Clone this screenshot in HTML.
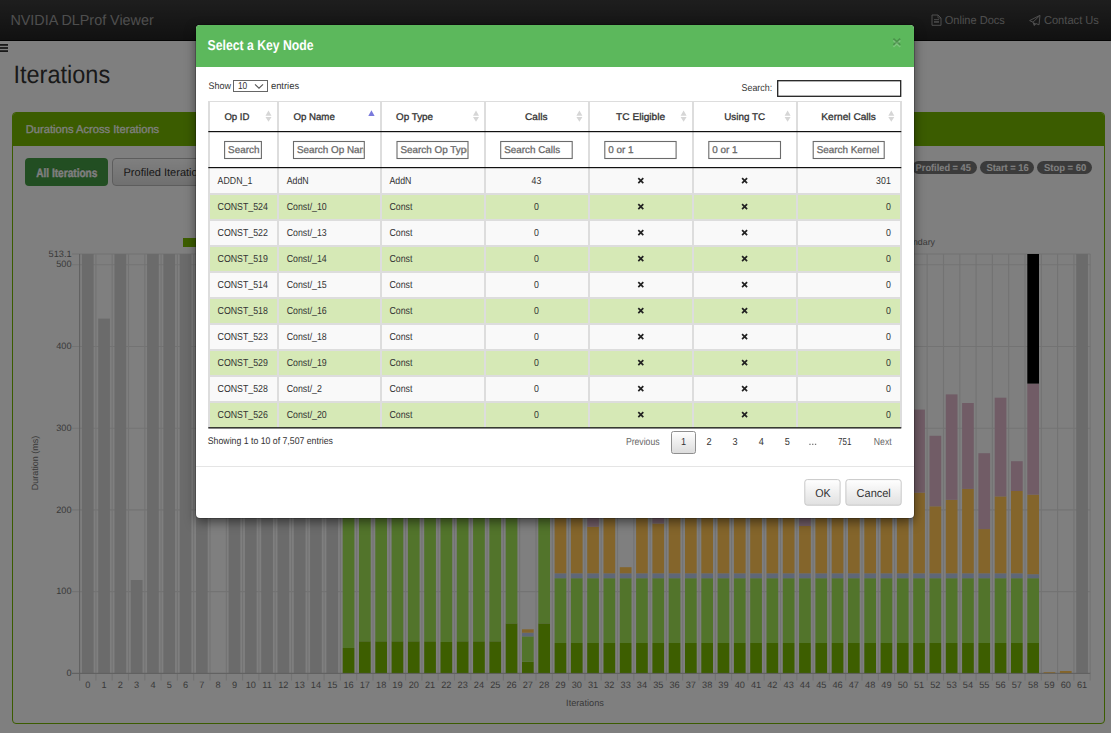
<!DOCTYPE html>
<html><head><meta charset="utf-8">
<style>
html,body{margin:0;padding:0;width:1111px;height:733px;overflow:hidden;background:#fff;font-family:"Liberation Sans",sans-serif;}
.layer{position:absolute;left:0;top:0;font-family:"Liberation Sans",sans-serif;text-rendering:geometricPrecision;}
.abs{position:absolute;}
#nav{position:absolute;left:0;top:0;width:1111px;height:40px;background:linear-gradient(#3c3c3c,#222);border-bottom:1px solid #080808;}
.panel{position:absolute;left:12px;top:112px;width:1091px;height:610px;border:1px solid #76b900;border-radius:4px;}
.panel-h{position:absolute;left:0;top:0;right:0;height:33px;background:#76b900;border-radius:3px 3px 0 0;}
.btn-ai{position:absolute;left:25px;top:158px;width:83px;height:28px;background:#449d44;border-radius:4px;}
.btn-pi{position:absolute;left:112px;top:158px;width:140px;height:26px;background:linear-gradient(#fff,#e0e0e0);border:1px solid #bbb;border-radius:4px;}
.badge{position:absolute;top:161px;height:13px;border-radius:7px;background:#777;}
#backdrop{position:absolute;left:0;top:0;width:1111px;height:733px;background:rgba(0,0,0,.5);}
#modal{position:absolute;left:196px;top:25px;width:718px;height:493px;background:#fff;border-radius:4px;box-shadow:0 0 0 1px rgba(0,0,0,.2),0 4px 11px rgba(0,0,0,.5);overflow:hidden;}
.mh{position:absolute;left:0;top:0;width:718px;height:42px;background:#5cb85c;}
</style></head><body>
<div id="nav"></div>
<div class="panel"><div class="panel-h"></div></div>
<div class="btn-ai"></div>
<div class="btn-pi"></div>
<div class="badge" style="left:912px;width:65px"></div>
<div class="badge" style="left:980px;width:54px"></div>
<div class="badge" style="left:1037px;width:55px"></div>
<svg class="layer" width="1111" height="733"><text transform="translate(10.40,24.90) scale(0.9783,1)" font-size="14.680" fill="#9d9d9d">NVIDIA DLProf Viewer</text><text transform="translate(944.70,23.90) scale(0.9520,1)" font-size="11.628" fill="#9d9d9d">Online Docs</text><text transform="translate(1043.90,23.90) scale(0.9581,1)" font-size="11.628" fill="#9d9d9d">Contact Us</text><text transform="translate(13.50,83.20) scale(0.9350,1)" font-size="25.145" fill="#333">Iterations</text><text transform="translate(25.70,132.60) scale(0.9861,1)" font-size="11.337" fill="#fff" stroke="#fff" stroke-width="0.25">Durations Across Iterations</text><text transform="translate(36.20,175.60) scale(0.8491,1)" font-size="11.919" font-weight="bold" fill="#000" fill-opacity="0.25">All Iterations</text><text transform="translate(36.20,176.60) scale(0.8389,1)" font-size="12.064" font-weight="bold" fill="#fff" stroke="#fff" stroke-width="0.35">All Iterations</text><text transform="translate(123.50,175.90) scale(1.0000,1)" font-size="11.047" fill="#333">Profiled Iterations</text><text transform="translate(915.62,171.10) scale(0.9360,1)" font-size="9.884" font-weight="bold" fill="#fff">Profiled = 45</text><text transform="translate(986.40,171.10) scale(0.9470,1)" font-size="9.884" font-weight="bold" fill="#fff">Start = 16</text><text transform="translate(1044.00,171.10) scale(0.9566,1)" font-size="9.884" font-weight="bold" fill="#fff">Stop = 60</text><rect x="0" y="44" width="8" height="1.8" fill="#333"/><rect x="0" y="47.1" width="8" height="1.8" fill="#333"/><rect x="0" y="50.2" width="8" height="1.8" fill="#333"/><path d="M932 15 h6 l3 3 v7.3 h-9 z" fill="none" stroke="#9d9d9d" stroke-width="1"/><path d="M938 15 v3 h3" fill="none" stroke="#9d9d9d" stroke-width="0.8"/><rect x="934" y="19.2" width="5" height="0.9" fill="#9d9d9d"/><rect x="934" y="21.2" width="5" height="1.5" fill="#9d9d9d"/><path d="M1040 15.3 L1029.6 20.6 L1033 22.2 L1034.3 25.5 L1036 23.6 L1039 24.8 Z M1040 15.3 L1033 22.2" fill="none" stroke="#9d9d9d" stroke-width="1" stroke-linejoin="round"/><path d="M1033 22.2 L1034.3 25.5 L1036 23.6 Z" fill="#9d9d9d"/></svg>
<div id="backdrop"></div>
<svg class="layer" width="1111" height="733"><line x1="72" y1="673.40" x2="1090.20" y2="673.40" stroke="#737373" stroke-width="1.1"/><line x1="72" y1="591.66" x2="1090.20" y2="591.66" stroke="#737373" stroke-width="1.1"/><line x1="72" y1="509.92" x2="1090.20" y2="509.92" stroke="#737373" stroke-width="1.1"/><line x1="72" y1="428.18" x2="1090.20" y2="428.18" stroke="#737373" stroke-width="1.1"/><line x1="72" y1="346.44" x2="1090.20" y2="346.44" stroke="#737373" stroke-width="1.1"/><line x1="72" y1="264.70" x2="1090.20" y2="264.70" stroke="#737373" stroke-width="1.1"/><line x1="72" y1="253.99" x2="1090.20" y2="253.99" stroke="#737373" stroke-width="1.1"/><line x1="79.60" y1="253.99" x2="79.60" y2="680.6" stroke="#737373" stroke-width="1.1"/><line x1="95.90" y1="253.99" x2="95.90" y2="680.6" stroke="#737373" stroke-width="1.1"/><line x1="112.20" y1="253.99" x2="112.20" y2="680.6" stroke="#737373" stroke-width="1.1"/><line x1="128.50" y1="253.99" x2="128.50" y2="680.6" stroke="#737373" stroke-width="1.1"/><line x1="144.80" y1="253.99" x2="144.80" y2="680.6" stroke="#737373" stroke-width="1.1"/><line x1="161.10" y1="253.99" x2="161.10" y2="680.6" stroke="#737373" stroke-width="1.1"/><line x1="177.40" y1="253.99" x2="177.40" y2="680.6" stroke="#737373" stroke-width="1.1"/><line x1="193.70" y1="253.99" x2="193.70" y2="680.6" stroke="#737373" stroke-width="1.1"/><line x1="210.00" y1="253.99" x2="210.00" y2="680.6" stroke="#737373" stroke-width="1.1"/><line x1="226.30" y1="253.99" x2="226.30" y2="680.6" stroke="#737373" stroke-width="1.1"/><line x1="242.60" y1="253.99" x2="242.60" y2="680.6" stroke="#737373" stroke-width="1.1"/><line x1="258.90" y1="253.99" x2="258.90" y2="680.6" stroke="#737373" stroke-width="1.1"/><line x1="275.20" y1="253.99" x2="275.20" y2="680.6" stroke="#737373" stroke-width="1.1"/><line x1="291.50" y1="253.99" x2="291.50" y2="680.6" stroke="#737373" stroke-width="1.1"/><line x1="307.80" y1="253.99" x2="307.80" y2="680.6" stroke="#737373" stroke-width="1.1"/><line x1="324.10" y1="253.99" x2="324.10" y2="680.6" stroke="#737373" stroke-width="1.1"/><line x1="340.40" y1="253.99" x2="340.40" y2="680.6" stroke="#737373" stroke-width="1.1"/><line x1="356.70" y1="253.99" x2="356.70" y2="680.6" stroke="#737373" stroke-width="1.1"/><line x1="373.00" y1="253.99" x2="373.00" y2="680.6" stroke="#737373" stroke-width="1.1"/><line x1="389.30" y1="253.99" x2="389.30" y2="680.6" stroke="#737373" stroke-width="1.1"/><line x1="405.60" y1="253.99" x2="405.60" y2="680.6" stroke="#737373" stroke-width="1.1"/><line x1="421.90" y1="253.99" x2="421.90" y2="680.6" stroke="#737373" stroke-width="1.1"/><line x1="438.20" y1="253.99" x2="438.20" y2="680.6" stroke="#737373" stroke-width="1.1"/><line x1="454.50" y1="253.99" x2="454.50" y2="680.6" stroke="#737373" stroke-width="1.1"/><line x1="470.80" y1="253.99" x2="470.80" y2="680.6" stroke="#737373" stroke-width="1.1"/><line x1="487.10" y1="253.99" x2="487.10" y2="680.6" stroke="#737373" stroke-width="1.1"/><line x1="503.40" y1="253.99" x2="503.40" y2="680.6" stroke="#737373" stroke-width="1.1"/><line x1="519.70" y1="253.99" x2="519.70" y2="680.6" stroke="#737373" stroke-width="1.1"/><line x1="536.00" y1="253.99" x2="536.00" y2="680.6" stroke="#737373" stroke-width="1.1"/><line x1="552.30" y1="253.99" x2="552.30" y2="680.6" stroke="#737373" stroke-width="1.1"/><line x1="568.60" y1="253.99" x2="568.60" y2="680.6" stroke="#737373" stroke-width="1.1"/><line x1="584.90" y1="253.99" x2="584.90" y2="680.6" stroke="#737373" stroke-width="1.1"/><line x1="601.20" y1="253.99" x2="601.20" y2="680.6" stroke="#737373" stroke-width="1.1"/><line x1="617.50" y1="253.99" x2="617.50" y2="680.6" stroke="#737373" stroke-width="1.1"/><line x1="633.80" y1="253.99" x2="633.80" y2="680.6" stroke="#737373" stroke-width="1.1"/><line x1="650.10" y1="253.99" x2="650.10" y2="680.6" stroke="#737373" stroke-width="1.1"/><line x1="666.40" y1="253.99" x2="666.40" y2="680.6" stroke="#737373" stroke-width="1.1"/><line x1="682.70" y1="253.99" x2="682.70" y2="680.6" stroke="#737373" stroke-width="1.1"/><line x1="699.00" y1="253.99" x2="699.00" y2="680.6" stroke="#737373" stroke-width="1.1"/><line x1="715.30" y1="253.99" x2="715.30" y2="680.6" stroke="#737373" stroke-width="1.1"/><line x1="731.60" y1="253.99" x2="731.60" y2="680.6" stroke="#737373" stroke-width="1.1"/><line x1="747.90" y1="253.99" x2="747.90" y2="680.6" stroke="#737373" stroke-width="1.1"/><line x1="764.20" y1="253.99" x2="764.20" y2="680.6" stroke="#737373" stroke-width="1.1"/><line x1="780.50" y1="253.99" x2="780.50" y2="680.6" stroke="#737373" stroke-width="1.1"/><line x1="796.80" y1="253.99" x2="796.80" y2="680.6" stroke="#737373" stroke-width="1.1"/><line x1="813.10" y1="253.99" x2="813.10" y2="680.6" stroke="#737373" stroke-width="1.1"/><line x1="829.40" y1="253.99" x2="829.40" y2="680.6" stroke="#737373" stroke-width="1.1"/><line x1="845.70" y1="253.99" x2="845.70" y2="680.6" stroke="#737373" stroke-width="1.1"/><line x1="862.00" y1="253.99" x2="862.00" y2="680.6" stroke="#737373" stroke-width="1.1"/><line x1="878.30" y1="253.99" x2="878.30" y2="680.6" stroke="#737373" stroke-width="1.1"/><line x1="894.60" y1="253.99" x2="894.60" y2="680.6" stroke="#737373" stroke-width="1.1"/><line x1="910.90" y1="253.99" x2="910.90" y2="680.6" stroke="#737373" stroke-width="1.1"/><line x1="927.20" y1="253.99" x2="927.20" y2="680.6" stroke="#737373" stroke-width="1.1"/><line x1="943.50" y1="253.99" x2="943.50" y2="680.6" stroke="#737373" stroke-width="1.1"/><line x1="959.80" y1="253.99" x2="959.80" y2="680.6" stroke="#737373" stroke-width="1.1"/><line x1="976.10" y1="253.99" x2="976.10" y2="680.6" stroke="#737373" stroke-width="1.1"/><line x1="992.40" y1="253.99" x2="992.40" y2="680.6" stroke="#737373" stroke-width="1.1"/><line x1="1008.70" y1="253.99" x2="1008.70" y2="680.6" stroke="#737373" stroke-width="1.1"/><line x1="1025.00" y1="253.99" x2="1025.00" y2="680.6" stroke="#737373" stroke-width="1.1"/><line x1="1041.30" y1="253.99" x2="1041.30" y2="680.6" stroke="#737373" stroke-width="1.1"/><line x1="1057.60" y1="253.99" x2="1057.60" y2="680.6" stroke="#737373" stroke-width="1.1"/><line x1="1073.90" y1="253.99" x2="1073.90" y2="680.6" stroke="#737373" stroke-width="1.1"/><line x1="1090.20" y1="253.99" x2="1090.20" y2="680.6" stroke="#737373" stroke-width="1.1"/><rect x="81.90" y="254.00" width="11.7" height="419.40" fill="#6b6b6b"/><rect x="98.20" y="318.60" width="11.7" height="354.80" fill="#6b6b6b"/><rect x="114.50" y="254.00" width="11.7" height="419.40" fill="#6b6b6b"/><rect x="130.80" y="580.00" width="11.7" height="93.40" fill="#6b6b6b"/><rect x="147.10" y="254.00" width="11.7" height="419.40" fill="#6b6b6b"/><rect x="163.40" y="254.00" width="11.7" height="419.40" fill="#6b6b6b"/><rect x="179.70" y="254.00" width="11.7" height="419.40" fill="#6b6b6b"/><rect x="196.00" y="254.00" width="11.7" height="419.40" fill="#6b6b6b"/><rect x="228.60" y="254.00" width="11.7" height="419.40" fill="#6b6b6b"/><rect x="244.90" y="254.00" width="11.7" height="419.40" fill="#6b6b6b"/><rect x="261.20" y="254.00" width="11.7" height="419.40" fill="#6b6b6b"/><rect x="277.50" y="254.00" width="11.7" height="419.40" fill="#6b6b6b"/><rect x="293.80" y="254.00" width="11.7" height="419.40" fill="#6b6b6b"/><rect x="310.10" y="254.00" width="11.7" height="419.40" fill="#6b6b6b"/><rect x="326.40" y="254.00" width="11.7" height="419.40" fill="#6b6b6b"/><rect x="342.70" y="648.00" width="11.7" height="25.40" fill="#3d5e00"/><rect x="342.70" y="400.00" width="11.7" height="248.00" fill="#52742b"/><rect x="359.00" y="641.30" width="11.7" height="32.10" fill="#3d5e00"/><rect x="359.00" y="400.00" width="11.7" height="241.30" fill="#52742b"/><rect x="375.30" y="641.30" width="11.7" height="32.10" fill="#3d5e00"/><rect x="375.30" y="400.00" width="11.7" height="241.30" fill="#52742b"/><rect x="391.60" y="641.30" width="11.7" height="32.10" fill="#3d5e00"/><rect x="391.60" y="400.00" width="11.7" height="241.30" fill="#52742b"/><rect x="407.90" y="641.30" width="11.7" height="32.10" fill="#3d5e00"/><rect x="407.90" y="400.00" width="11.7" height="241.30" fill="#52742b"/><rect x="424.20" y="641.30" width="11.7" height="32.10" fill="#3d5e00"/><rect x="424.20" y="400.00" width="11.7" height="241.30" fill="#52742b"/><rect x="440.50" y="642.00" width="11.7" height="31.40" fill="#3d5e00"/><rect x="440.50" y="400.00" width="11.7" height="242.00" fill="#52742b"/><rect x="456.80" y="641.30" width="11.7" height="32.10" fill="#3d5e00"/><rect x="456.80" y="400.00" width="11.7" height="241.30" fill="#52742b"/><rect x="473.10" y="641.30" width="11.7" height="32.10" fill="#3d5e00"/><rect x="473.10" y="400.00" width="11.7" height="241.30" fill="#52742b"/><rect x="489.40" y="641.30" width="11.7" height="32.10" fill="#3d5e00"/><rect x="489.40" y="400.00" width="11.7" height="241.30" fill="#52742b"/><rect x="505.70" y="623.40" width="11.7" height="50.00" fill="#3d5e00"/><rect x="505.70" y="400.00" width="11.7" height="223.40" fill="#52742b"/><rect x="522.00" y="661.70" width="11.7" height="11.70" fill="#3d5e00"/><rect x="522.00" y="636.40" width="11.7" height="25.30" fill="#52742b"/><rect x="522.00" y="632.70" width="11.7" height="3.70" fill="#5f6777"/><rect x="522.00" y="629.30" width="11.7" height="3.40" fill="#84652b"/><rect x="538.30" y="623.40" width="11.7" height="50.00" fill="#3d5e00"/><rect x="538.30" y="400.00" width="11.7" height="223.40" fill="#52742b"/><rect x="554.60" y="643.00" width="11.7" height="30.40" fill="#3d5e00"/><rect x="554.60" y="578.20" width="11.7" height="64.80" fill="#52742b"/><rect x="554.60" y="573.30" width="11.7" height="4.90" fill="#5f6777"/><rect x="554.60" y="450.00" width="11.7" height="123.30" fill="#84652b"/><rect x="570.90" y="643.00" width="11.7" height="30.40" fill="#3d5e00"/><rect x="570.90" y="578.20" width="11.7" height="64.80" fill="#52742b"/><rect x="570.90" y="573.30" width="11.7" height="4.90" fill="#5f6777"/><rect x="570.90" y="450.00" width="11.7" height="123.30" fill="#84652b"/><rect x="587.20" y="643.00" width="11.7" height="30.40" fill="#3d5e00"/><rect x="587.20" y="578.20" width="11.7" height="64.80" fill="#52742b"/><rect x="587.20" y="573.30" width="11.7" height="4.90" fill="#5f6777"/><rect x="587.20" y="526.70" width="11.7" height="46.60" fill="#84652b"/><rect x="587.20" y="450.00" width="11.7" height="76.70" fill="#715c66"/><rect x="603.50" y="643.00" width="11.7" height="30.40" fill="#3d5e00"/><rect x="603.50" y="578.20" width="11.7" height="64.80" fill="#52742b"/><rect x="603.50" y="573.30" width="11.7" height="4.90" fill="#5f6777"/><rect x="603.50" y="450.00" width="11.7" height="123.30" fill="#84652b"/><rect x="619.80" y="643.00" width="11.7" height="30.40" fill="#3d5e00"/><rect x="619.80" y="578.20" width="11.7" height="64.80" fill="#52742b"/><rect x="619.80" y="573.30" width="11.7" height="4.90" fill="#5f6777"/><rect x="619.80" y="567.20" width="11.7" height="6.10" fill="#84652b"/><rect x="636.10" y="643.00" width="11.7" height="30.40" fill="#3d5e00"/><rect x="636.10" y="578.20" width="11.7" height="64.80" fill="#52742b"/><rect x="636.10" y="573.30" width="11.7" height="4.90" fill="#5f6777"/><rect x="636.10" y="450.00" width="11.7" height="123.30" fill="#84652b"/><rect x="652.40" y="643.00" width="11.7" height="30.40" fill="#3d5e00"/><rect x="652.40" y="578.20" width="11.7" height="64.80" fill="#52742b"/><rect x="652.40" y="573.30" width="11.7" height="4.90" fill="#5f6777"/><rect x="652.40" y="523.50" width="11.7" height="49.80" fill="#84652b"/><rect x="652.40" y="450.00" width="11.7" height="73.50" fill="#715c66"/><rect x="668.70" y="643.00" width="11.7" height="30.40" fill="#3d5e00"/><rect x="668.70" y="578.20" width="11.7" height="64.80" fill="#52742b"/><rect x="668.70" y="573.30" width="11.7" height="4.90" fill="#5f6777"/><rect x="668.70" y="450.00" width="11.7" height="123.30" fill="#84652b"/><rect x="685.00" y="643.00" width="11.7" height="30.40" fill="#3d5e00"/><rect x="685.00" y="578.20" width="11.7" height="64.80" fill="#52742b"/><rect x="685.00" y="573.30" width="11.7" height="4.90" fill="#5f6777"/><rect x="685.00" y="450.00" width="11.7" height="123.30" fill="#84652b"/><rect x="701.30" y="643.00" width="11.7" height="30.40" fill="#3d5e00"/><rect x="701.30" y="578.20" width="11.7" height="64.80" fill="#52742b"/><rect x="701.30" y="573.30" width="11.7" height="4.90" fill="#5f6777"/><rect x="701.30" y="450.00" width="11.7" height="123.30" fill="#84652b"/><rect x="717.60" y="643.00" width="11.7" height="30.40" fill="#3d5e00"/><rect x="717.60" y="578.20" width="11.7" height="64.80" fill="#52742b"/><rect x="717.60" y="573.30" width="11.7" height="4.90" fill="#5f6777"/><rect x="717.60" y="450.00" width="11.7" height="123.30" fill="#84652b"/><rect x="733.90" y="643.00" width="11.7" height="30.40" fill="#3d5e00"/><rect x="733.90" y="578.20" width="11.7" height="64.80" fill="#52742b"/><rect x="733.90" y="573.30" width="11.7" height="4.90" fill="#5f6777"/><rect x="733.90" y="450.00" width="11.7" height="123.30" fill="#84652b"/><rect x="750.20" y="643.00" width="11.7" height="30.40" fill="#3d5e00"/><rect x="750.20" y="578.20" width="11.7" height="64.80" fill="#52742b"/><rect x="750.20" y="573.30" width="11.7" height="4.90" fill="#5f6777"/><rect x="750.20" y="450.00" width="11.7" height="123.30" fill="#84652b"/><rect x="766.50" y="643.00" width="11.7" height="30.40" fill="#3d5e00"/><rect x="766.50" y="578.20" width="11.7" height="64.80" fill="#52742b"/><rect x="766.50" y="573.30" width="11.7" height="4.90" fill="#5f6777"/><rect x="766.50" y="450.00" width="11.7" height="123.30" fill="#84652b"/><rect x="782.80" y="643.00" width="11.7" height="30.40" fill="#3d5e00"/><rect x="782.80" y="578.20" width="11.7" height="64.80" fill="#52742b"/><rect x="782.80" y="573.30" width="11.7" height="4.90" fill="#5f6777"/><rect x="782.80" y="450.00" width="11.7" height="123.30" fill="#84652b"/><rect x="799.10" y="643.00" width="11.7" height="30.40" fill="#3d5e00"/><rect x="799.10" y="578.20" width="11.7" height="64.80" fill="#52742b"/><rect x="799.10" y="573.30" width="11.7" height="4.90" fill="#5f6777"/><rect x="799.10" y="526.00" width="11.7" height="47.30" fill="#84652b"/><rect x="799.10" y="450.00" width="11.7" height="76.00" fill="#715c66"/><rect x="815.40" y="643.00" width="11.7" height="30.40" fill="#3d5e00"/><rect x="815.40" y="578.20" width="11.7" height="64.80" fill="#52742b"/><rect x="815.40" y="573.30" width="11.7" height="4.90" fill="#5f6777"/><rect x="815.40" y="450.00" width="11.7" height="123.30" fill="#84652b"/><rect x="831.70" y="643.00" width="11.7" height="30.40" fill="#3d5e00"/><rect x="831.70" y="578.20" width="11.7" height="64.80" fill="#52742b"/><rect x="831.70" y="573.30" width="11.7" height="4.90" fill="#5f6777"/><rect x="831.70" y="450.00" width="11.7" height="123.30" fill="#84652b"/><rect x="848.00" y="643.00" width="11.7" height="30.40" fill="#3d5e00"/><rect x="848.00" y="578.20" width="11.7" height="64.80" fill="#52742b"/><rect x="848.00" y="573.30" width="11.7" height="4.90" fill="#5f6777"/><rect x="848.00" y="450.00" width="11.7" height="123.30" fill="#84652b"/><rect x="864.30" y="643.00" width="11.7" height="30.40" fill="#3d5e00"/><rect x="864.30" y="578.20" width="11.7" height="64.80" fill="#52742b"/><rect x="864.30" y="573.30" width="11.7" height="4.90" fill="#5f6777"/><rect x="864.30" y="450.00" width="11.7" height="123.30" fill="#84652b"/><rect x="880.60" y="643.00" width="11.7" height="30.40" fill="#3d5e00"/><rect x="880.60" y="578.20" width="11.7" height="64.80" fill="#52742b"/><rect x="880.60" y="573.30" width="11.7" height="4.90" fill="#5f6777"/><rect x="880.60" y="450.00" width="11.7" height="123.30" fill="#84652b"/><rect x="896.90" y="643.00" width="11.7" height="30.40" fill="#3d5e00"/><rect x="896.90" y="578.20" width="11.7" height="64.80" fill="#52742b"/><rect x="896.90" y="573.30" width="11.7" height="4.90" fill="#5f6777"/><rect x="896.90" y="450.00" width="11.7" height="123.30" fill="#84652b"/><rect x="913.20" y="643.00" width="11.7" height="30.40" fill="#3d5e00"/><rect x="913.20" y="578.20" width="11.7" height="64.80" fill="#52742b"/><rect x="913.20" y="573.30" width="11.7" height="4.90" fill="#5f6777"/><rect x="913.20" y="492.60" width="11.7" height="80.70" fill="#84652b"/><rect x="913.20" y="409.60" width="11.7" height="83.00" fill="#715c66"/><rect x="929.50" y="643.00" width="11.7" height="30.40" fill="#3d5e00"/><rect x="929.50" y="578.20" width="11.7" height="64.80" fill="#52742b"/><rect x="929.50" y="573.30" width="11.7" height="4.90" fill="#5f6777"/><rect x="929.50" y="506.30" width="11.7" height="67.00" fill="#84652b"/><rect x="929.50" y="435.80" width="11.7" height="70.50" fill="#715c66"/><rect x="945.80" y="643.00" width="11.7" height="30.40" fill="#3d5e00"/><rect x="945.80" y="578.20" width="11.7" height="64.80" fill="#52742b"/><rect x="945.80" y="573.30" width="11.7" height="4.90" fill="#5f6777"/><rect x="945.80" y="499.80" width="11.7" height="73.50" fill="#84652b"/><rect x="945.80" y="394.40" width="11.7" height="105.40" fill="#715c66"/><rect x="962.10" y="643.00" width="11.7" height="30.40" fill="#3d5e00"/><rect x="962.10" y="578.20" width="11.7" height="64.80" fill="#52742b"/><rect x="962.10" y="573.30" width="11.7" height="4.90" fill="#5f6777"/><rect x="962.10" y="488.90" width="11.7" height="84.40" fill="#84652b"/><rect x="962.10" y="403.00" width="11.7" height="85.90" fill="#715c66"/><rect x="978.40" y="643.00" width="11.7" height="30.40" fill="#3d5e00"/><rect x="978.40" y="578.20" width="11.7" height="64.80" fill="#52742b"/><rect x="978.40" y="573.30" width="11.7" height="4.90" fill="#5f6777"/><rect x="978.40" y="529.10" width="11.7" height="44.20" fill="#84652b"/><rect x="978.40" y="453.20" width="11.7" height="75.90" fill="#715c66"/><rect x="994.70" y="643.00" width="11.7" height="30.40" fill="#3d5e00"/><rect x="994.70" y="578.20" width="11.7" height="64.80" fill="#52742b"/><rect x="994.70" y="573.30" width="11.7" height="4.90" fill="#5f6777"/><rect x="994.70" y="496.40" width="11.7" height="76.90" fill="#84652b"/><rect x="994.70" y="397.70" width="11.7" height="98.70" fill="#715c66"/><rect x="1011.00" y="643.00" width="11.7" height="30.40" fill="#3d5e00"/><rect x="1011.00" y="578.20" width="11.7" height="64.80" fill="#52742b"/><rect x="1011.00" y="573.30" width="11.7" height="4.90" fill="#5f6777"/><rect x="1011.00" y="491.00" width="11.7" height="82.30" fill="#84652b"/><rect x="1011.00" y="461.20" width="11.7" height="29.80" fill="#715c66"/><rect x="1027.30" y="643.00" width="11.7" height="30.40" fill="#3d5e00"/><rect x="1027.30" y="578.20" width="11.7" height="64.80" fill="#52742b"/><rect x="1027.30" y="574.20" width="11.7" height="4.00" fill="#5f6777"/><rect x="1027.30" y="494.60" width="11.7" height="79.60" fill="#84652b"/><rect x="1027.30" y="383.60" width="11.7" height="111.00" fill="#715c66"/><rect x="1027.30" y="254.00" width="11.7" height="129.60" fill="#000000"/><rect x="1043.60" y="672.20" width="11.7" height="1.20" fill="#84652b"/><rect x="1059.90" y="671.00" width="11.7" height="2.40" fill="#84652b"/><rect x="1076.20" y="254.00" width="11.7" height="419.40" fill="#6b6b6b"/><line x1="79.60" y1="253.99" x2="79.60" y2="680.6" stroke="#5e5e5e" stroke-width="0.9"/><line x1="72" y1="673.4" x2="1090.20" y2="673.4" stroke="#5e5e5e" stroke-width="0.9"/><text x="87.75" y="688.00" font-size="9.2" text-anchor="middle" fill="#383838">0</text><text x="104.05" y="688.00" font-size="9.2" text-anchor="middle" fill="#383838">1</text><text x="120.35" y="688.00" font-size="9.2" text-anchor="middle" fill="#383838">2</text><text x="136.65" y="688.00" font-size="9.2" text-anchor="middle" fill="#383838">3</text><text x="152.95" y="688.00" font-size="9.2" text-anchor="middle" fill="#383838">4</text><text x="169.25" y="688.00" font-size="9.2" text-anchor="middle" fill="#383838">5</text><text x="185.55" y="688.00" font-size="9.2" text-anchor="middle" fill="#383838">6</text><text x="201.85" y="688.00" font-size="9.2" text-anchor="middle" fill="#383838">7</text><text x="218.15" y="688.00" font-size="9.2" text-anchor="middle" fill="#383838">8</text><text x="234.45" y="688.00" font-size="9.2" text-anchor="middle" fill="#383838">9</text><text x="250.75" y="688.00" font-size="9.2" text-anchor="middle" fill="#383838">10</text><text x="267.05" y="688.00" font-size="9.2" text-anchor="middle" fill="#383838">11</text><text x="283.35" y="688.00" font-size="9.2" text-anchor="middle" fill="#383838">12</text><text x="299.65" y="688.00" font-size="9.2" text-anchor="middle" fill="#383838">13</text><text x="315.95" y="688.00" font-size="9.2" text-anchor="middle" fill="#383838">14</text><text x="332.25" y="688.00" font-size="9.2" text-anchor="middle" fill="#383838">15</text><text x="348.55" y="688.00" font-size="9.2" text-anchor="middle" fill="#383838">16</text><text x="364.85" y="688.00" font-size="9.2" text-anchor="middle" fill="#383838">17</text><text x="381.15" y="688.00" font-size="9.2" text-anchor="middle" fill="#383838">18</text><text x="397.45" y="688.00" font-size="9.2" text-anchor="middle" fill="#383838">19</text><text x="413.75" y="688.00" font-size="9.2" text-anchor="middle" fill="#383838">20</text><text x="430.05" y="688.00" font-size="9.2" text-anchor="middle" fill="#383838">21</text><text x="446.35" y="688.00" font-size="9.2" text-anchor="middle" fill="#383838">22</text><text x="462.65" y="688.00" font-size="9.2" text-anchor="middle" fill="#383838">23</text><text x="478.95" y="688.00" font-size="9.2" text-anchor="middle" fill="#383838">24</text><text x="495.25" y="688.00" font-size="9.2" text-anchor="middle" fill="#383838">25</text><text x="511.55" y="688.00" font-size="9.2" text-anchor="middle" fill="#383838">26</text><text x="527.85" y="688.00" font-size="9.2" text-anchor="middle" fill="#383838">27</text><text x="544.15" y="688.00" font-size="9.2" text-anchor="middle" fill="#383838">28</text><text x="560.45" y="688.00" font-size="9.2" text-anchor="middle" fill="#383838">29</text><text x="576.75" y="688.00" font-size="9.2" text-anchor="middle" fill="#383838">30</text><text x="593.05" y="688.00" font-size="9.2" text-anchor="middle" fill="#383838">31</text><text x="609.35" y="688.00" font-size="9.2" text-anchor="middle" fill="#383838">32</text><text x="625.65" y="688.00" font-size="9.2" text-anchor="middle" fill="#383838">33</text><text x="641.95" y="688.00" font-size="9.2" text-anchor="middle" fill="#383838">34</text><text x="658.25" y="688.00" font-size="9.2" text-anchor="middle" fill="#383838">35</text><text x="674.55" y="688.00" font-size="9.2" text-anchor="middle" fill="#383838">36</text><text x="690.85" y="688.00" font-size="9.2" text-anchor="middle" fill="#383838">37</text><text x="707.15" y="688.00" font-size="9.2" text-anchor="middle" fill="#383838">38</text><text x="723.45" y="688.00" font-size="9.2" text-anchor="middle" fill="#383838">39</text><text x="739.75" y="688.00" font-size="9.2" text-anchor="middle" fill="#383838">40</text><text x="756.05" y="688.00" font-size="9.2" text-anchor="middle" fill="#383838">41</text><text x="772.35" y="688.00" font-size="9.2" text-anchor="middle" fill="#383838">42</text><text x="788.65" y="688.00" font-size="9.2" text-anchor="middle" fill="#383838">43</text><text x="804.95" y="688.00" font-size="9.2" text-anchor="middle" fill="#383838">44</text><text x="821.25" y="688.00" font-size="9.2" text-anchor="middle" fill="#383838">45</text><text x="837.55" y="688.00" font-size="9.2" text-anchor="middle" fill="#383838">46</text><text x="853.85" y="688.00" font-size="9.2" text-anchor="middle" fill="#383838">47</text><text x="870.15" y="688.00" font-size="9.2" text-anchor="middle" fill="#383838">48</text><text x="886.45" y="688.00" font-size="9.2" text-anchor="middle" fill="#383838">49</text><text x="902.75" y="688.00" font-size="9.2" text-anchor="middle" fill="#383838">50</text><text x="919.05" y="688.00" font-size="9.2" text-anchor="middle" fill="#383838">51</text><text x="935.35" y="688.00" font-size="9.2" text-anchor="middle" fill="#383838">52</text><text x="951.65" y="688.00" font-size="9.2" text-anchor="middle" fill="#383838">53</text><text x="967.95" y="688.00" font-size="9.2" text-anchor="middle" fill="#383838">54</text><text x="984.25" y="688.00" font-size="9.2" text-anchor="middle" fill="#383838">55</text><text x="1000.55" y="688.00" font-size="9.2" text-anchor="middle" fill="#383838">56</text><text x="1016.85" y="688.00" font-size="9.2" text-anchor="middle" fill="#383838">57</text><text x="1033.15" y="688.00" font-size="9.2" text-anchor="middle" fill="#383838">58</text><text x="1049.45" y="688.00" font-size="9.2" text-anchor="middle" fill="#383838">59</text><text x="1065.75" y="688.00" font-size="9.2" text-anchor="middle" fill="#383838">60</text><text x="1082.05" y="688.00" font-size="9.2" text-anchor="middle" fill="#383838">61</text><text x="71.60" y="676.00" font-size="9.2" text-anchor="end" fill="#383838">0</text><text x="71.60" y="594.26" font-size="9.2" text-anchor="end" fill="#383838">100</text><text x="71.60" y="512.52" font-size="9.2" text-anchor="end" fill="#383838">200</text><text x="71.60" y="430.78" font-size="9.2" text-anchor="end" fill="#383838">300</text><text x="71.60" y="349.04" font-size="9.2" text-anchor="end" fill="#383838">400</text><text x="71.60" y="267.30" font-size="9.2" text-anchor="end" fill="#383838">500</text><text x="71.60" y="256.59" font-size="9.2" text-anchor="end" fill="#383838">513.1</text><text x="585.00" y="705.80" font-size="9.2" text-anchor="middle" fill="#383838">Iterations</text><text transform="translate(37.6,463) rotate(-90)" text-anchor="middle" font-size="9.0" fill="#383838">Duration (ms)</text><rect x="183" y="238" width="29" height="9" fill="#3d5e00"/><text x="935.00" y="245.00" font-size="8.8" text-anchor="end" fill="#383838">Boundary</text></svg>
<div id="modal"><div class="mh"></div></div>
<svg class="layer" width="1111" height="733"><text transform="translate(207.60,49.70) scale(0.8575,1)" font-size="14.244" font-weight="bold" fill="#fff">Select a Key Node</text><path d="M893.4 39.4 L900.2 45.8 M900.2 39.4 L893.4 45.8" stroke="#fff" stroke-opacity="0.2" stroke-width="1.8" transform="translate(0,1)"/><path d="M893.4 38.6 L900.2 45 M900.2 38.6 L893.4 45" stroke="#000" stroke-opacity="0.2" stroke-width="1.8"/><text transform="translate(208.60,88.90) scale(0.9367,1)" font-size="9.593" fill="#333">Show</text><rect x="233.5" y="80.5" width="34" height="11" fill="#fff" stroke="#666" stroke-width="1"/><text transform="translate(237.90,88.90) scale(0.8339,1)" font-size="10.029" fill="#333">10</text><path d="M255 84.3 L259 88.2 L263 84.3" fill="none" stroke="#555" stroke-width="1.1"/><text transform="translate(270.90,88.90) scale(0.9830,1)" font-size="9.593" fill="#333">entries</text><text transform="translate(741.50,90.90) scale(0.9014,1)" font-size="9.884" fill="#333">Search:</text><rect x="777.7" y="80.7" width="123" height="15.6" fill="#fff" stroke="#222" stroke-width="1.3"/><rect x="209" y="168" width="692" height="26" fill="#f9f9f9"/><rect x="209" y="194" width="692" height="26" fill="#d6e9b6"/><rect x="209" y="220" width="692" height="26" fill="#f9f9f9"/><rect x="209" y="246" width="692" height="26" fill="#d6e9b6"/><rect x="209" y="272" width="692" height="26" fill="#f9f9f9"/><rect x="209" y="298" width="692" height="26" fill="#d6e9b6"/><rect x="209" y="324" width="692" height="26" fill="#f9f9f9"/><rect x="209" y="350" width="692" height="26" fill="#d6e9b6"/><rect x="209" y="376" width="692" height="26" fill="#f9f9f9"/><rect x="209" y="402" width="692" height="26" fill="#d6e9b6"/><rect x="209" y="193" width="692" height="2" fill="#dddddd"/><rect x="209" y="219" width="692" height="2" fill="#dddddd"/><rect x="209" y="245" width="692" height="2" fill="#dddddd"/><rect x="209" y="271" width="692" height="2" fill="#dddddd"/><rect x="209" y="297" width="692" height="2" fill="#dddddd"/><rect x="209" y="323" width="692" height="2" fill="#dddddd"/><rect x="209" y="349" width="692" height="2" fill="#dddddd"/><rect x="209" y="375" width="692" height="2" fill="#dddddd"/><rect x="209" y="401" width="692" height="2" fill="#dddddd"/><rect x="208" y="101" width="694" height="1" fill="#dddddd"/><rect x="208" y="101" width="2" height="327" fill="#dddddd"/><rect x="277" y="101" width="2" height="327" fill="#dddddd"/><rect x="380" y="101" width="2" height="327" fill="#dddddd"/><rect x="484" y="101" width="2" height="327" fill="#dddddd"/><rect x="588" y="101" width="2" height="327" fill="#dddddd"/><rect x="692" y="101" width="2" height="327" fill="#dddddd"/><rect x="796" y="101" width="2" height="327" fill="#dddddd"/><rect x="900" y="101" width="2" height="327" fill="#dddddd"/><rect x="208.3" y="131" width="693" height="1.2" fill="#111"/><rect x="208.3" y="167" width="693" height="1.2" fill="#111"/><rect x="208.3" y="427.2" width="693" height="1.3" fill="#111"/><text transform="translate(224.40,120.00) scale(0.9868,1)" font-size="9.738" fill="#333" stroke="#333" stroke-width="0.3">Op ID</text><text transform="translate(293.40,120.00) scale(0.9959,1)" font-size="9.738" fill="#333" stroke="#333" stroke-width="0.3">Op Name</text><text transform="translate(396.10,120.00) scale(1.0099,1)" font-size="9.738" fill="#333" stroke="#333" stroke-width="0.3">Op Type</text><text transform="translate(525.10,120.00) scale(1.0347,1)" font-size="9.738" fill="#333" stroke="#333" stroke-width="0.3">Calls</text><text transform="translate(616.10,120.00) scale(1.0407,1)" font-size="9.738" fill="#333" stroke="#333" stroke-width="0.3">TC Eligible</text><text transform="translate(724.20,120.00) scale(1.0123,1)" font-size="9.738" fill="#333" stroke="#333" stroke-width="0.3">Using TC</text><text transform="translate(821.30,120.00) scale(1.0419,1)" font-size="9.738" fill="#333" stroke="#333" stroke-width="0.3">Kernel Calls</text><path d="M265.5 115.7 L268.5 110.6 L271.5 115.7 Z M265.5 117 L268.5 121.8 L271.5 117 Z" fill="#d6d6d6"/><path d="M473 115.7 L476 110.6 L479 115.7 Z M473 117 L476 121.8 L479 117 Z" fill="#d6d6d6"/><path d="M576.4 115.7 L579.4 110.6 L582.4 115.7 Z M576.4 117 L579.4 121.8 L582.4 117 Z" fill="#d6d6d6"/><path d="M680.6 115.7 L683.6 110.6 L686.6 115.7 Z M680.6 117 L683.6 121.8 L686.6 117 Z" fill="#d6d6d6"/><path d="M784.6 115.7 L787.6 110.6 L790.6 115.7 Z M784.6 117 L787.6 121.8 L790.6 117 Z" fill="#d6d6d6"/><path d="M888.3 115.7 L891.3 110.6 L894.3 115.7 Z M888.3 117 L891.3 121.8 L894.3 117 Z" fill="#d6d6d6"/><path d="M368.3 115.9 L371.45 110.3 L374.6 115.9 Z" fill="#7a7adc"/><defs><clipPath id="c0"><rect x="225.1" y="142" width="35.3" height="16"/></clipPath><clipPath id="c1"><rect x="294" y="142" width="69.3" height="16"/></clipPath><clipPath id="c2"><rect x="397.5" y="142" width="69.5" height="16"/></clipPath><clipPath id="c3"><rect x="501.2" y="142" width="70.0" height="16"/></clipPath><clipPath id="c4"><rect x="605.3" y="142" width="69.8" height="16"/></clipPath><clipPath id="c5"><rect x="709.3" y="142" width="70.2" height="16"/></clipPath><clipPath id="c6"><rect x="813.7" y="142" width="69.5" height="16"/></clipPath></defs><rect x="224.6" y="141.5" width="36.8" height="17" fill="#fff" stroke="#6b6b6b" stroke-width="1.1"/><g clip-path="url(#c0)"><text transform="translate(228.10,152.90) scale(1.0000,1)" font-size="9.884" fill="#6a6a6a" stroke="#6a6a6a" stroke-width="0.3">Search</text></g><rect x="293.5" y="141.5" width="70.8" height="17" fill="#fff" stroke="#6b6b6b" stroke-width="1.1"/><g clip-path="url(#c1)"><text transform="translate(297.00,152.90) scale(1.0000,1)" font-size="9.884" fill="#6a6a6a" stroke="#6a6a6a" stroke-width="0.3">Search Op Name</text></g><rect x="397.0" y="141.5" width="71" height="17" fill="#fff" stroke="#6b6b6b" stroke-width="1.1"/><g clip-path="url(#c2)"><text transform="translate(400.50,152.90) scale(1.0000,1)" font-size="9.884" fill="#6a6a6a" stroke="#6a6a6a" stroke-width="0.3">Search Op Type</text></g><rect x="500.7" y="141.5" width="71.5" height="17" fill="#fff" stroke="#6b6b6b" stroke-width="1.1"/><g clip-path="url(#c3)"><text transform="translate(504.20,152.90) scale(1.0000,1)" font-size="9.884" fill="#6a6a6a" stroke="#6a6a6a" stroke-width="0.3">Search Calls</text></g><rect x="604.8" y="141.5" width="71.3" height="17" fill="#fff" stroke="#6b6b6b" stroke-width="1.1"/><g clip-path="url(#c4)"><text transform="translate(608.30,152.90) scale(1.0000,1)" font-size="9.884" fill="#6a6a6a" stroke="#6a6a6a" stroke-width="0.3">0 or 1</text></g><rect x="708.8" y="141.5" width="71.7" height="17" fill="#fff" stroke="#6b6b6b" stroke-width="1.1"/><g clip-path="url(#c5)"><text transform="translate(712.30,152.90) scale(1.0000,1)" font-size="9.884" fill="#6a6a6a" stroke="#6a6a6a" stroke-width="0.3">0 or 1</text></g><rect x="813.2" y="141.5" width="71" height="17" fill="#fff" stroke="#6b6b6b" stroke-width="1.1"/><g clip-path="url(#c6)"><text transform="translate(816.70,152.90) scale(1.0000,1)" font-size="9.884" fill="#6a6a6a" stroke="#6a6a6a" stroke-width="0.3">Search Kernel</text></g><text transform="translate(217.60,183.90) scale(0.8650,1)" font-size="10.174" fill="#333">ADDN_1</text><text transform="translate(286.70,183.90) scale(0.8650,1)" font-size="10.174" fill="#333">AddN</text><text transform="translate(389.40,183.90) scale(0.8650,1)" font-size="10.174" fill="#333">AddN</text><text transform="translate(531.61,183.90) scale(0.8650,1)" font-size="10.174" fill="#333">43</text><path d="M638.3 178.20000000000002 L643.3 183.20000000000002 M643.3 178.20000000000002 L638.3 183.20000000000002" stroke="#222" stroke-width="1.7"/><path d="M742.1 178.20000000000002 L747.1 183.20000000000002 M747.1 178.20000000000002 L742.1 183.20000000000002" stroke="#222" stroke-width="1.7"/><text transform="translate(876.12,183.90) scale(0.8650,1)" font-size="10.174" fill="#333">301</text><text transform="translate(217.60,209.90) scale(0.8650,1)" font-size="10.174" fill="#333">CONST_524</text><text transform="translate(286.70,209.90) scale(0.8650,1)" font-size="10.174" fill="#333">Const/_10</text><text transform="translate(389.40,209.90) scale(0.8650,1)" font-size="10.174" fill="#333">Const</text><text transform="translate(534.05,209.90) scale(0.8650,1)" font-size="10.174" fill="#333">0</text><path d="M638.3 204.20000000000002 L643.3 209.20000000000002 M643.3 204.20000000000002 L638.3 209.20000000000002" stroke="#222" stroke-width="1.7"/><path d="M742.1 204.20000000000002 L747.1 209.20000000000002 M747.1 204.20000000000002 L742.1 209.20000000000002" stroke="#222" stroke-width="1.7"/><text transform="translate(885.91,209.90) scale(0.8650,1)" font-size="10.174" fill="#333">0</text><text transform="translate(217.60,235.90) scale(0.8650,1)" font-size="10.174" fill="#333">CONST_522</text><text transform="translate(286.70,235.90) scale(0.8650,1)" font-size="10.174" fill="#333">Const/_13</text><text transform="translate(389.40,235.90) scale(0.8650,1)" font-size="10.174" fill="#333">Const</text><text transform="translate(534.05,235.90) scale(0.8650,1)" font-size="10.174" fill="#333">0</text><path d="M638.3 230.20000000000002 L643.3 235.20000000000002 M643.3 230.20000000000002 L638.3 235.20000000000002" stroke="#222" stroke-width="1.7"/><path d="M742.1 230.20000000000002 L747.1 235.20000000000002 M747.1 230.20000000000002 L742.1 235.20000000000002" stroke="#222" stroke-width="1.7"/><text transform="translate(885.91,235.90) scale(0.8650,1)" font-size="10.174" fill="#333">0</text><text transform="translate(217.60,261.90) scale(0.8650,1)" font-size="10.174" fill="#333">CONST_519</text><text transform="translate(286.70,261.90) scale(0.8650,1)" font-size="10.174" fill="#333">Const/_14</text><text transform="translate(389.40,261.90) scale(0.8650,1)" font-size="10.174" fill="#333">Const</text><text transform="translate(534.05,261.90) scale(0.8650,1)" font-size="10.174" fill="#333">0</text><path d="M638.3 256.2 L643.3 261.2 M643.3 256.2 L638.3 261.2" stroke="#222" stroke-width="1.7"/><path d="M742.1 256.2 L747.1 261.2 M747.1 256.2 L742.1 261.2" stroke="#222" stroke-width="1.7"/><text transform="translate(885.91,261.90) scale(0.8650,1)" font-size="10.174" fill="#333">0</text><text transform="translate(217.60,287.90) scale(0.8650,1)" font-size="10.174" fill="#333">CONST_514</text><text transform="translate(286.70,287.90) scale(0.8650,1)" font-size="10.174" fill="#333">Const/_15</text><text transform="translate(389.40,287.90) scale(0.8650,1)" font-size="10.174" fill="#333">Const</text><text transform="translate(534.05,287.90) scale(0.8650,1)" font-size="10.174" fill="#333">0</text><path d="M638.3 282.2 L643.3 287.2 M643.3 282.2 L638.3 287.2" stroke="#222" stroke-width="1.7"/><path d="M742.1 282.2 L747.1 287.2 M747.1 282.2 L742.1 287.2" stroke="#222" stroke-width="1.7"/><text transform="translate(885.91,287.90) scale(0.8650,1)" font-size="10.174" fill="#333">0</text><text transform="translate(217.60,313.90) scale(0.8650,1)" font-size="10.174" fill="#333">CONST_518</text><text transform="translate(286.70,313.90) scale(0.8650,1)" font-size="10.174" fill="#333">Const/_16</text><text transform="translate(389.40,313.90) scale(0.8650,1)" font-size="10.174" fill="#333">Const</text><text transform="translate(534.05,313.90) scale(0.8650,1)" font-size="10.174" fill="#333">0</text><path d="M638.3 308.2 L643.3 313.2 M643.3 308.2 L638.3 313.2" stroke="#222" stroke-width="1.7"/><path d="M742.1 308.2 L747.1 313.2 M747.1 308.2 L742.1 313.2" stroke="#222" stroke-width="1.7"/><text transform="translate(885.91,313.90) scale(0.8650,1)" font-size="10.174" fill="#333">0</text><text transform="translate(217.60,339.90) scale(0.8650,1)" font-size="10.174" fill="#333">CONST_523</text><text transform="translate(286.70,339.90) scale(0.8650,1)" font-size="10.174" fill="#333">Const/_18</text><text transform="translate(389.40,339.90) scale(0.8650,1)" font-size="10.174" fill="#333">Const</text><text transform="translate(534.05,339.90) scale(0.8650,1)" font-size="10.174" fill="#333">0</text><path d="M638.3 334.2 L643.3 339.2 M643.3 334.2 L638.3 339.2" stroke="#222" stroke-width="1.7"/><path d="M742.1 334.2 L747.1 339.2 M747.1 334.2 L742.1 339.2" stroke="#222" stroke-width="1.7"/><text transform="translate(885.91,339.90) scale(0.8650,1)" font-size="10.174" fill="#333">0</text><text transform="translate(217.60,365.90) scale(0.8650,1)" font-size="10.174" fill="#333">CONST_529</text><text transform="translate(286.70,365.90) scale(0.8650,1)" font-size="10.174" fill="#333">Const/_19</text><text transform="translate(389.40,365.90) scale(0.8650,1)" font-size="10.174" fill="#333">Const</text><text transform="translate(534.05,365.90) scale(0.8650,1)" font-size="10.174" fill="#333">0</text><path d="M638.3 360.2 L643.3 365.2 M643.3 360.2 L638.3 365.2" stroke="#222" stroke-width="1.7"/><path d="M742.1 360.2 L747.1 365.2 M747.1 360.2 L742.1 365.2" stroke="#222" stroke-width="1.7"/><text transform="translate(885.91,365.90) scale(0.8650,1)" font-size="10.174" fill="#333">0</text><text transform="translate(217.60,391.90) scale(0.8650,1)" font-size="10.174" fill="#333">CONST_528</text><text transform="translate(286.70,391.90) scale(0.8650,1)" font-size="10.174" fill="#333">Const/_2</text><text transform="translate(389.40,391.90) scale(0.8650,1)" font-size="10.174" fill="#333">Const</text><text transform="translate(534.05,391.90) scale(0.8650,1)" font-size="10.174" fill="#333">0</text><path d="M638.3 386.2 L643.3 391.2 M643.3 386.2 L638.3 391.2" stroke="#222" stroke-width="1.7"/><path d="M742.1 386.2 L747.1 391.2 M747.1 386.2 L742.1 391.2" stroke="#222" stroke-width="1.7"/><text transform="translate(885.91,391.90) scale(0.8650,1)" font-size="10.174" fill="#333">0</text><text transform="translate(217.60,417.90) scale(0.8650,1)" font-size="10.174" fill="#333">CONST_526</text><text transform="translate(286.70,417.90) scale(0.8650,1)" font-size="10.174" fill="#333">Const/_20</text><text transform="translate(389.40,417.90) scale(0.8650,1)" font-size="10.174" fill="#333">Const</text><text transform="translate(534.05,417.90) scale(0.8650,1)" font-size="10.174" fill="#333">0</text><path d="M638.3 412.2 L643.3 417.2 M643.3 412.2 L638.3 417.2" stroke="#222" stroke-width="1.7"/><path d="M742.1 412.2 L747.1 417.2 M747.1 412.2 L742.1 417.2" stroke="#222" stroke-width="1.7"/><text transform="translate(885.91,417.90) scale(0.8650,1)" font-size="10.174" fill="#333">0</text><text transform="translate(207.80,444.00) scale(0.8978,1)" font-size="9.738" fill="#333">Showing 1 to 10 of 7,507 entries</text><defs><linearGradient id="gb" x1="0" y1="0" x2="0" y2="1"><stop offset="0" stop-color="#fff"/><stop offset="1" stop-color="#dcdcdc"/></linearGradient></defs><rect x="671.5" y="431.5" width="24" height="22" rx="2" fill="url(#gb)" stroke="#8f8f8f" stroke-width="1"/><text transform="translate(625.90,445.00) scale(0.8513,1)" font-size="10.174" fill="#666">Previous</text><text transform="translate(680.95,445.00) scale(0.9000,1)" font-size="10.174" fill="#333">1</text><text transform="translate(706.55,445.00) scale(0.9000,1)" font-size="10.174" fill="#333">2</text><text transform="translate(732.45,445.00) scale(0.9000,1)" font-size="10.174" fill="#333">3</text><text transform="translate(758.65,445.00) scale(0.9000,1)" font-size="10.174" fill="#333">4</text><text transform="translate(784.85,445.00) scale(0.9000,1)" font-size="10.174" fill="#333">5</text><text transform="translate(838.10,445.00) scale(0.7837,1)" font-size="10.174" fill="#333">751</text><rect x="809.30" y="443.7" width="1.3" height="1.3" fill="#777"/><rect x="812.10" y="443.7" width="1.3" height="1.3" fill="#777"/><rect x="814.90" y="443.7" width="1.3" height="1.3" fill="#777"/><text transform="translate(873.80,445.00) scale(0.8557,1)" font-size="10.174" fill="#666">Next</text><rect x="196" y="466" width="718" height="1" fill="#e5e5e5"/><defs><linearGradient id="gb2" x1="0" y1="0" x2="0" y2="1"><stop offset="0" stop-color="#fff"/><stop offset="1" stop-color="#e0e0e0"/></linearGradient></defs><rect x="804.8" y="479.6" width="35.3" height="25.6" rx="2.5" fill="url(#gb2)" stroke="#c8c8c8" stroke-width="1"/><rect x="845.9" y="479.6" width="55.3" height="25.6" rx="2.5" fill="url(#gb2)" stroke="#c8c8c8" stroke-width="1"/><text transform="translate(815.20,497.10) scale(0.9342,1)" font-size="11.483" fill="#333">OK</text><text transform="translate(856.60,497.10) scale(0.9568,1)" font-size="11.483" fill="#333">Cancel</text></svg>
</body></html>
